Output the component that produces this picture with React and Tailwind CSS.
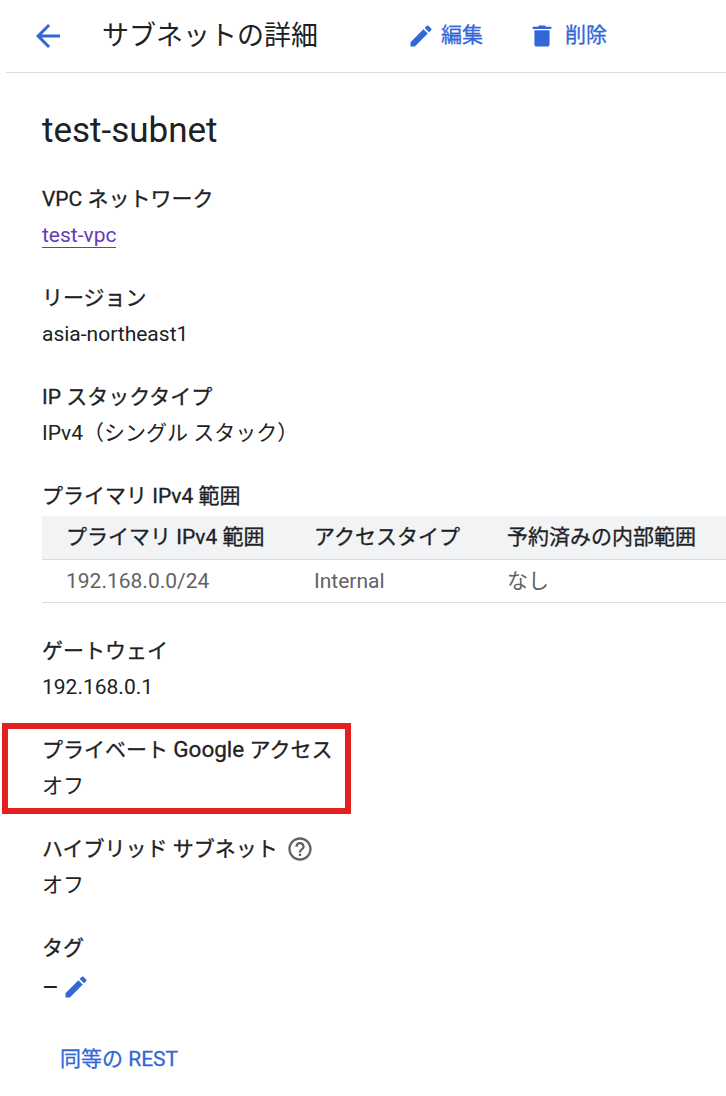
const Pencil = ({className}) => (
  <svg viewBox="0 0 24 24" fill="currentColor" className={className}>
    <path d="M3 17.25V21h3.75L17.81 9.94l-3.75-3.75L3 17.25zM20.71 7.04a1 1 0 0 0 0-1.41l-2.34-2.34a1 1 0 0 0-1.41 0l-1.83 1.83 3.75 3.75 1.83-1.83z" />
  </svg>
);

const Trash = ({className}) => (
  <svg viewBox="0 0 24 24" fill="currentColor" className={className}>
    <path d="M5.5 19c0 1.1.9 2 2 2h9c1.1 0 2-.9 2-2V7h-13v12zM20 4h-4.5l-1-1h-5l-1 1H4v2h16V4z" />
  </svg>
);

const Help = ({className}) => (
  <svg viewBox="0 0 24 24" fill="currentColor" className={className}>
    <path d="M11 18h2v-2h-2v2zm1-16C6.48 2 2 6.48 2 12s4.48 10 10 10 10-4.48 10-10S17.52 2 12 2zm0 18c-4.41 0-8-3.59-8-8s3.59-8 8-8 8 3.59 8 8-3.59 8-8 8zm0-14c-2.21 0-4 1.79-4 4h2c0-1.1.9-2 2-2s2 .9 2 2c0 2-3 1.75-3 5h2c0-2.25 3-2.5 3-5 0-2.21-1.79-4-4-4z" />
  </svg>
);

const Field = ({label, children}) => (
  <div className="mb-[27px]">
    <div className="text-[21px] leading-[36px] font-normal [-webkit-text-stroke:0.3px] text-[#202124]">{label}</div>
    <div className="text-[21px] leading-[36px] text-[#202124]">{children}</div>
  </div>
);

export default function App() {
  return (
    <div className="relative w-[726px] h-[1096px] overflow-hidden bg-white font-['Roboto','Noto_Sans_CJK_JP',sans-serif]">
      {/* Header */}
      <div className="ml-1.5 h-[73px] border-b border-[#dadce0] flex items-center">
        <svg viewBox="0 0 24 24" fill="currentColor" className="ml-[24px] w-[36px] h-[36px] text-[#3367d6]">
          <path d="M20 11H7.83l5.59-5.59L12 4l-8 8 8 8 1.41-1.41L7.83 13H20v-2z" />
        </svg>
        <h1 className="ml-[36px] w-[305px] text-[27px] text-[#202124]">サブネットの詳細</h1>
        <button className="flex items-center gap-[6px] text-[21px] font-normal [-webkit-text-stroke:0.3px] text-[#3367d6]">
          <Pencil className="w-[28px] h-[28px]" />
          編集
        </button>
        <button className="ml-[45px] flex items-center gap-[9px] text-[21px] font-normal [-webkit-text-stroke:0.3px] text-[#3367d6]">
          <Trash className="w-[28px] h-[28px]" />
          削除
        </button>
      </div>

      {/* Body */}
      <div className="pl-[42px] pt-[35px]">
        <h2 className="text-[35px] leading-[46px] text-[#202124] mb-[27px]">test-subnet</h2>

        <Field label="VPC ネットワーク">
          <a className="text-[#673ab7] border-b border-[#673ab7]">test-vpc</a>
        </Field>
        <Field label="リージョン">asia-northeast1</Field>
        <Field label="IP スタックタイプ">IPv4（シングル スタック）</Field>

        <div className="mb-[30px]">
          <div className="text-[21px] leading-[36px] font-normal [-webkit-text-stroke:0.3px] text-[#202124] mb-[2px]">プライマリ IPv4 範囲</div>
          <table className="w-[684px] text-[21px] text-left border-collapse table-fixed">
            <thead>
              <tr className="bg-[#f1f3f4] border-b border-[#dadce0] h-[43px]">
                <th className="pl-6 w-[272px] font-normal [-webkit-text-stroke:0.3px] text-[#202124]">プライマリ IPv4 範囲</th>
                <th className="w-[193px] font-normal [-webkit-text-stroke:0.3px] text-[#202124]">アクセスタイプ</th>
                <th className="font-normal [-webkit-text-stroke:0.3px] text-[#202124]">予約済みの内部範囲</th>
              </tr>
            </thead>
            <tbody>
              <tr className="border-b border-[#dadce0] h-[43px] text-[#5f6368]">
                <td className="pl-6 pt-[2px]">192.168.0.0/24</td>
                <td className="pt-[2px]">Internal</td>
                <td className="pt-[2px]">なし</td>
              </tr>
            </tbody>
          </table>
        </div>

        <Field label="ゲートウェイ">192.168.0.1</Field>
        <Field label={<>プライベート <span className="text-[22.5px] leading-[20px]">Google</span> アクセス</>}>オフ</Field>
        <Field label={
          <span className="flex items-center gap-[8px]">
            ハイブリッド サブネット
            <Help className="w-[28px] h-[28px] text-[#5f6368]" />
          </span>
        }>オフ</Field>
        <Field label="タグ">
          <span className="flex items-center gap-[3px] pt-[3px]">
            <span className="text-[26px] leading-[36px]">–</span>
            <Pencil className="w-[28px] h-[28px] text-[#3367d6]" />
          </span>
        </Field>

        <button className="ml-[18px] mt-[12px] text-[21px] font-normal [-webkit-text-stroke:0.3px] text-[#3367d6]">同等の REST</button>
      </div>

      {/* red annotation box */}
      <div className="absolute left-[2px] top-[723px] w-[349px] h-[91px] border-[6px] border-[#e51f1f]" />
    </div>
  );
}
